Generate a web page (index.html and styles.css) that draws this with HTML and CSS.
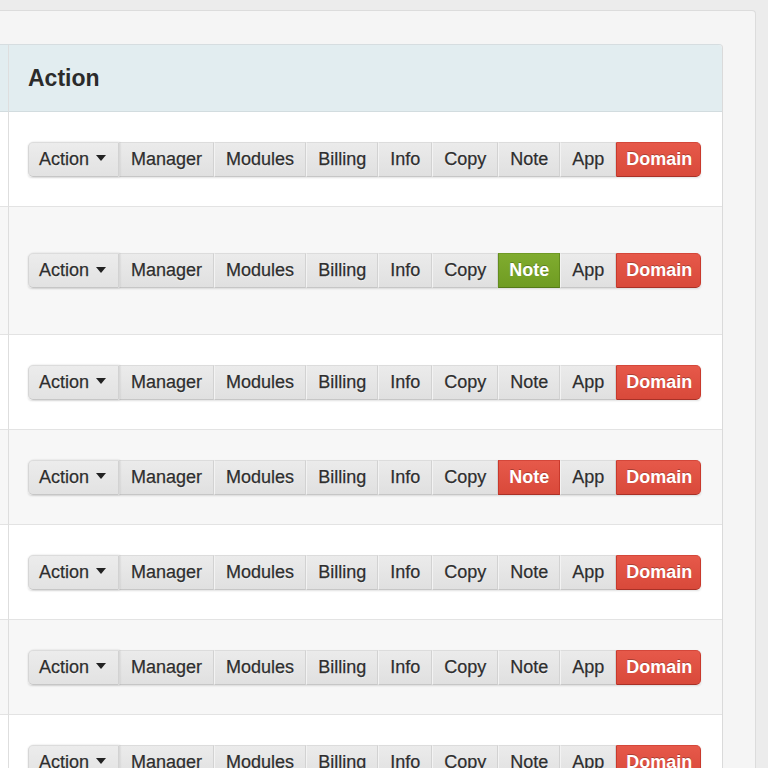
FILE: index.html
```html
<!DOCTYPE html>
<html>
<head>
<meta charset="utf-8">
<link rel="stylesheet" href="styles.css">
</head>
<body>
<div class="page">
  <div class="panel">
    <table class="grid">
      <thead>
        <tr><th class="stub"></th><th class="col-action">Action</th></tr>
      </thead>
      <tbody>
        <tr class="odd"><td class="stub"></td><td class="cell">
          <div class="btn-group"><span class="btn first">Action <i class="caret"></i></span><span class="btn">Manager</span><span class="btn">Modules</span><span class="btn">Billing</span><span class="btn">Info</span><span class="btn">Copy</span><span class="btn">Note</span><span class="btn">App</span><span class="btn danger last">Domain</span></div>
        </td></tr>
        <tr class="even tall"><td class="stub"></td><td class="cell">
          <div class="btn-group"><span class="btn first">Action <i class="caret"></i></span><span class="btn">Manager</span><span class="btn">Modules</span><span class="btn">Billing</span><span class="btn">Info</span><span class="btn">Copy</span><span class="btn success">Note</span><span class="btn">App</span><span class="btn danger last">Domain</span></div>
        </td></tr>
        <tr class="odd"><td class="stub"></td><td class="cell">
          <div class="btn-group"><span class="btn first">Action <i class="caret"></i></span><span class="btn">Manager</span><span class="btn">Modules</span><span class="btn">Billing</span><span class="btn">Info</span><span class="btn">Copy</span><span class="btn">Note</span><span class="btn">App</span><span class="btn danger last">Domain</span></div>
        </td></tr>
        <tr class="even"><td class="stub"></td><td class="cell">
          <div class="btn-group"><span class="btn first">Action <i class="caret"></i></span><span class="btn">Manager</span><span class="btn">Modules</span><span class="btn">Billing</span><span class="btn">Info</span><span class="btn">Copy</span><span class="btn danger">Note</span><span class="btn">App</span><span class="btn danger last">Domain</span></div>
        </td></tr>
        <tr class="odd"><td class="stub"></td><td class="cell">
          <div class="btn-group"><span class="btn first">Action <i class="caret"></i></span><span class="btn">Manager</span><span class="btn">Modules</span><span class="btn">Billing</span><span class="btn">Info</span><span class="btn">Copy</span><span class="btn">Note</span><span class="btn">App</span><span class="btn danger last">Domain</span></div>
        </td></tr>
        <tr class="even"><td class="stub"></td><td class="cell">
          <div class="btn-group"><span class="btn first">Action <i class="caret"></i></span><span class="btn">Manager</span><span class="btn">Modules</span><span class="btn">Billing</span><span class="btn">Info</span><span class="btn">Copy</span><span class="btn">Note</span><span class="btn">App</span><span class="btn danger last">Domain</span></div>
        </td></tr>
        <tr class="odd"><td class="stub"></td><td class="cell">
          <div class="btn-group"><span class="btn first">Action <i class="caret"></i></span><span class="btn">Manager</span><span class="btn">Modules</span><span class="btn">Billing</span><span class="btn">Info</span><span class="btn">Copy</span><span class="btn">Note</span><span class="btn">App</span><span class="btn danger last">Domain</span></div>
        </td></tr>
      </tbody>
    </table>
  </div>
</div>
</body>
</html>
```

FILE: styles.css
```css
html, body {
  margin: 0;
  padding: 0;
  background: #ececec;
  font-family: "Liberation Sans", Arial, sans-serif;
  color: #333;
  overflow: hidden;
}

.page {
  padding-top: 10px;
  padding-right: 12px;
  height: 758px;
}

.panel {
  background: #f5f5f5;
  border: 1px solid #dcdcdc;
  border-left: none;
  border-bottom: none;
  border-top-right-radius: 4px;
  padding: 33px 32px 0 0;
  height: 100%;
  box-sizing: border-box;
}

.grid {
  width: 100%;
  border-collapse: separate;
  border-spacing: 0;
  border-top: 1px solid #d6dde0;
  border-right: 1px solid #dadada;
  border-top-right-radius: 4px;
}

.grid th {
  background: #e2edf0;
  height: 66px;
  text-align: left;
  vertical-align: middle;
  font-size: 23px;
  font-weight: bold;
  color: #2b2b2b;
  border-bottom: 1px solid #d2dcdf;
  padding: 0;
}

.grid th.col-action {
  padding-left: 19px;
  border-top-right-radius: 4px;
}

.grid .stub {
  width: 8px;
  border-right: 1px solid #dedede;
  padding: 0;
}

.grid td {
  border-bottom: 1px solid #e3e3e3;
  height: 94px;
  vertical-align: middle;
  padding: 0;
}

.grid td.cell {
  padding-left: 19px;
}

.grid tr.odd td { background: #ffffff; }
.grid tr.even td { background: #f7f7f7; }
.grid tr.tall td { height: 127px; }

.btn-group {
  display: inline-flex;
  border-radius: 4px;
  box-shadow: 0 1px 2px rgba(0, 0, 0, 0.12);
}

.btn {
  display: inline-block;
  font-size: 18px;
  line-height: 25px;
  padding: 4px 11px 4px 11px;
  color: #2e2e2e;
  -webkit-text-stroke: 0.25px #2e2e2e;
  text-shadow: 0 1px 1px rgba(255, 255, 255, 0.7);
  background: linear-gradient(#ebebeb, #e0e0e0);
  border-top: 1px solid #dcdcdc;
  border-bottom: 1px solid #c6c6c6;
  border-left: 1px solid #f3f3f3;
  border-right: 1px solid #d2d2d2;
  white-space: nowrap;
}

.btn.first {
  padding-left: 10px;
  padding-right: 12px;
  border-left: 1px solid #d6d6d6;
  border-top-left-radius: 5px;
  border-bottom-left-radius: 5px;
  background: linear-gradient(#ececec, #e2e2e2);
  box-shadow: 1px 0 2px rgba(0, 0, 0, 0.15);
  position: relative;
  z-index: 1;
}

.btn.last {
  border-top-right-radius: 5px;
  border-bottom-right-radius: 5px;
}

.caret {
  display: inline-block;
  width: 0;
  height: 0;
  border-top: 6px solid #222;
  border-left: 5px solid transparent;
  border-right: 5px solid transparent;
  vertical-align: middle;
  margin-left: 2px;
  margin-top: -3px;
}

.btn.danger {
  color: #fff;
  -webkit-text-stroke: 0;
  font-weight: bold;
  padding-left: 10px;
  padding-right: 10px;
  text-shadow: 0 -1px 0 rgba(0, 0, 0, 0.25);
  background: linear-gradient(#e6594a, #d9493a);
  border-top-color: #d4473a;
  border-left-color: #c9392c;
  border-right-color: #c9392c;
  border-bottom-color: #a83127;
}

.btn.danger.last {
  padding-left: 9px;
  padding-right: 8px;
}

.btn.success {
  color: #fff;
  -webkit-text-stroke: 0;
  font-weight: bold;
  padding-left: 10px;
  padding-right: 10px;
  text-shadow: 0 -1px 0 rgba(0, 0, 0, 0.25);
  background: linear-gradient(#80ac2f, #6f9c22);
  border-top-color: #6f9a25;
  border-left-color: #648d1e;
  border-right-color: #648d1e;
  border-bottom-color: #557a18;
}
```
